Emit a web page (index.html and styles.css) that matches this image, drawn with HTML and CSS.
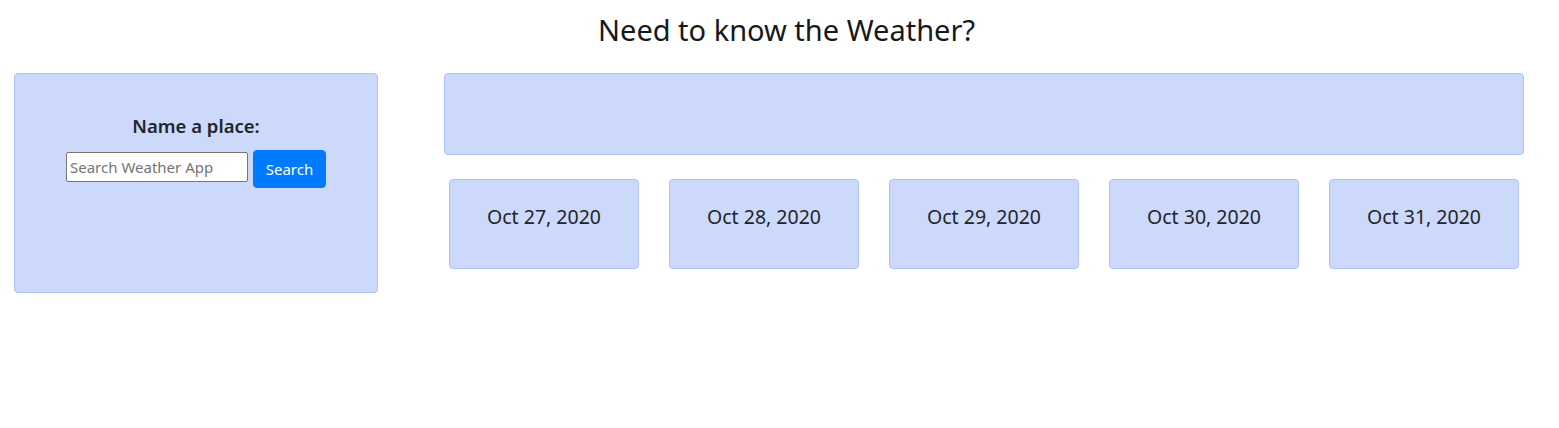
FILE: index.html
```html
<!DOCTYPE html>
<html lang="en">
<head>
<meta charset="utf-8">
<title>Weather App</title>
<link rel="stylesheet" href="styles.css">
</head>
<body>
<header class="page-header">
  <h1 class="title">Need to know the Weather?</h1>
</header>
<main class="layout">
  <section class="panel search-panel">
    <h2 class="search-heading">Name a place:</h2>
    <form class="search-form">
      <input class="search-input" type="text" placeholder="Search Weather App">
      <button class="search-btn" type="button">Search</button>
    </form>
  </section>
  <section class="results">
    <div class="panel current"></div>
    <div class="forecast">
      <div class="panel day"><h3 class="day-date">Oct 27, 2020</h3></div>
      <div class="panel day"><h3 class="day-date">Oct 28, 2020</h3></div>
      <div class="panel day"><h3 class="day-date">Oct 29, 2020</h3></div>
      <div class="panel day"><h3 class="day-date">Oct 30, 2020</h3></div>
      <div class="panel day"><h3 class="day-date">Oct 31, 2020</h3></div>
    </div>
  </section>
</main>
</body>
</html>
```
FILE: styles.css
```css
* { box-sizing: border-box; }
html, body { margin: 0; padding: 0; background: #fff; }
body {
  font-family: "Noto Sans", "Open Sans", "DejaVu Sans", sans-serif;
  color: #212529;
  width: 1559px;
  height: 428px;
  overflow: hidden;
}
.page-header {
  padding: 13px 0 0 14px;
  text-align: center;
}
.title {
  margin: 0;
  font-size: 29px;
  font-weight: 400;
  line-height: 34px;
  color: #16191c;
}
.layout {
  display: flex;
  align-items: flex-start;
  gap: 66px;
  padding-left: 14px;
  margin-top: 26px;
}
.panel {
  background: #ccd9fb;
  border: 1px solid #abc2f8;
  border-radius: 4px;
}
.search-panel {
  width: 364px;
  height: 220px;
  padding-top: 40px;
  text-align: center;
}
.search-heading {
  margin: 0 0 12px;
  font-size: 18.5px;
  font-weight: 600;
  line-height: 24px;
}
.search-form {
  display: flex;
  justify-content: center;
  align-items: flex-start;
  gap: 5px;
}
.search-input {
  width: 182px;
  height: 30px;
  margin-top: 2px;
  padding: 1px 3px;
  border: 1px solid #767676;
  border-radius: 2px;
  background: #fff;
  font-family: inherit;
  font-size: 15px;
  color: #212529;
}
.search-input::placeholder { color: #757575; }
.search-btn {
  width: 73px;
  height: 38px;
  padding: 0;
  border: 1px solid #007bff;
  border-radius: 4px;
  background: #007bff;
  color: #fff;
  font-family: inherit;
  font-size: 15px;
  line-height: 36px;
}
.results {
  width: 1080px;
}
.current {
  height: 82px;
}
.forecast {
  display: flex;
  gap: 30px;
  padding: 0 5px;
  margin-top: 24px;
}
.day {
  width: 190px;
  height: 90px;
  padding-top: 25px;
  text-align: center;
}
.day-date {
  margin: 0;
  font-size: 19.5px;
  font-weight: 400;
  line-height: 24px;
}
```
